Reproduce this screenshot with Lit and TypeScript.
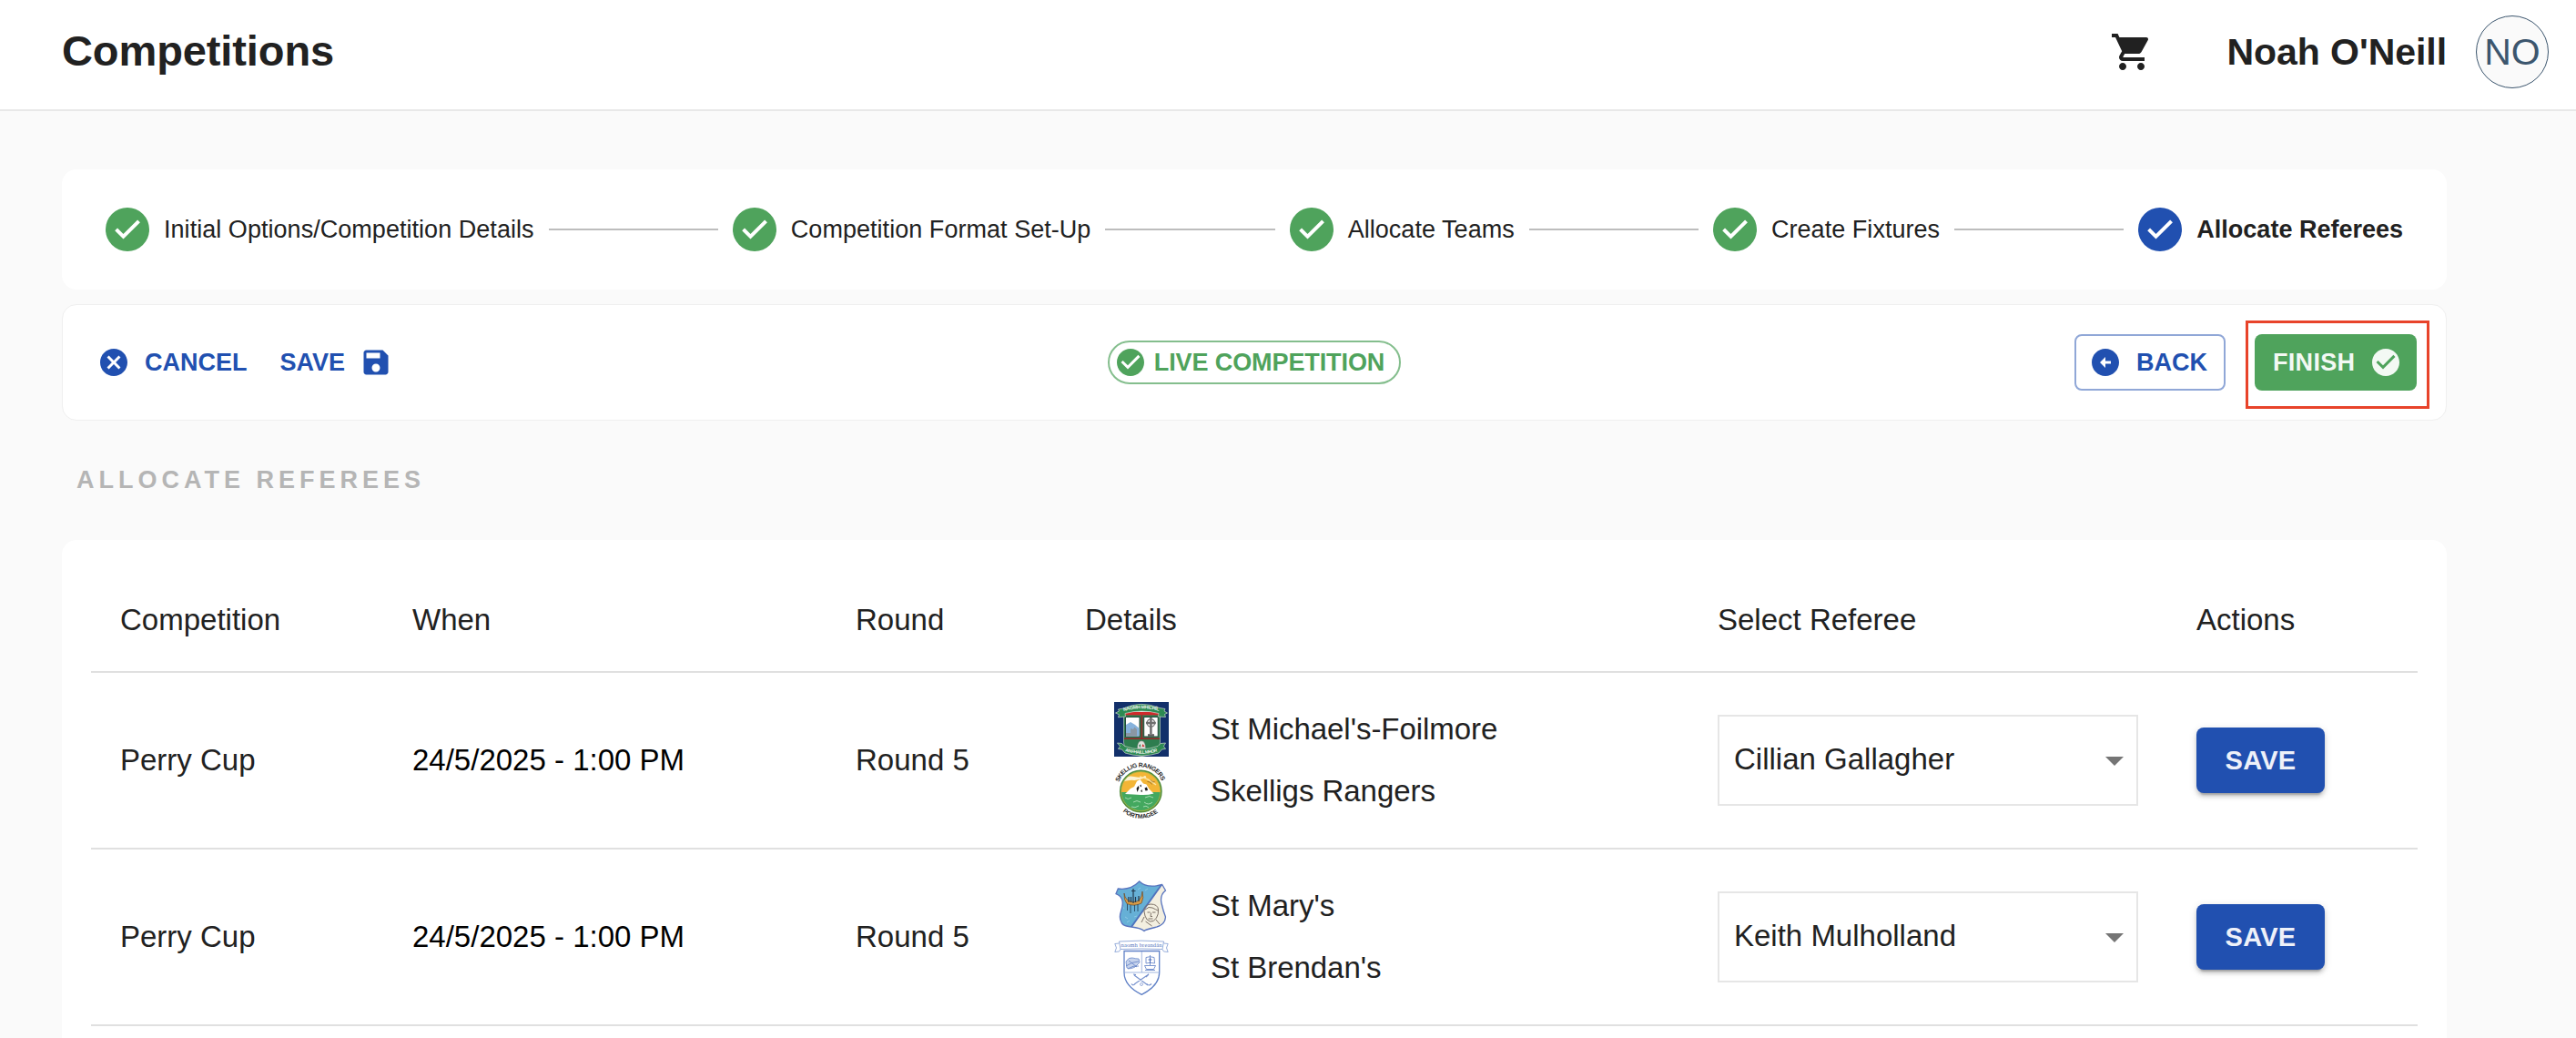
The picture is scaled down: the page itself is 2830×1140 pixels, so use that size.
import { LitElement, html, css, svg, TemplateResult } from 'lit';
import { customElement, property, state } from 'lit/decorators.js';
import { classMap } from 'lit/directives/class-map.js';

interface Step {
  label: string;
  active?: boolean;
}

interface Team {
  name: string;
  crest: string;
}

interface Fixture {
  competition: string;
  when: string;
  round: string;
  teams: Team[];
  referee: string;
}

const ICONS: Record<string, string> = {
  cart: 'M7 18c-1.1 0-1.99.9-1.99 2S5.9 22 7 22s2-.9 2-2-.9-2-2-2zM1 2v2h2l3.6 7.59-1.35 2.45c-.16.28-.25.61-.25.96 0 1.1.9 2 2 2h12v-2H7.42c-.14 0-.25-.11-.25-.25l.03-.12.9-1.63h7.45c.75 0 1.41-.41 1.75-1.03l3.58-6.49c.08-.14.12-.31.12-.48 0-.55-.45-1-1-1H5.21l-.94-2H1zm16 16c-1.1 0-1.99.9-1.99 2s.89 2 1.99 2 2-.9 2-2-.9-2-2-2z',
  check: 'M9 15.3L4.700 11 2.800 12.900 9 19 21.300 6.900 19.400 5z',
  cancel: 'M12 2C6.47 2 2 6.47 2 12s4.47 10 10 10 10-4.47 10-10S17.53 2 12 2zm5 13.59L15.59 17 12 13.41 8.41 17 7 15.59 10.59 12 7 8.41 8.41 7 12 10.59 15.59 7 17 8.41 13.41 12 17 15.59z',
  save: 'M17 3H5c-1.11 0-2 .9-2 2v14c0 1.1.89 2 2 2h14c1.1 0 2-.9 2-2V7l-4-4zm-5 16c-1.66 0-3-1.34-3-3s1.34-3 3-3 3 1.34 3 3-1.34 3-3 3zm3-10H5V5h10v4z',
  checkCircle: 'M12 2C6.48 2 2 6.48 2 12s4.48 10 10 10 10-4.48 10-10S17.52 2 12 2zm-2 15l-5-5 1.41-1.41L10 14.17l7.59-7.59L19 8l-9 9z',
  backCircle: 'M12 2C6.48 2 2 6.48 2 12s4.48 10 10 10 10-4.48 10-10S17.52 2 12 2zm4 11h-4v3l-4-4 4-4v3h4v2z',
};

@customElement('app-icon')
class AppIcon extends LitElement {
  @property() name = '';

  static styles = css`
    :host {
      display: block;
      width: 36px;
      height: 36px;
      flex: none;
    }
    svg {
      display: block;
      width: 100%;
      height: 100%;
      fill: currentColor;
    }
  `;

  render() {
    return html`<svg viewBox="0 0 24 24"><path d=${ICONS[this.name]}></path></svg>`;
  }
}

const CRESTS: Record<string, TemplateResult> = {
  foilmore: svg`
    <rect width="60" height="60" fill="#12306a"/>
    <path d="M10.5 10h40v34c0 8-10 14-20 15.500c-10-1.500-20-7.500-20-15.500z" fill="#2d7d4f" stroke="#b9c4bd" stroke-width=".7"/>
    <path d="M12 11V8.500q18.500-4 37 0V11z" fill="#eef2ee"/>
    <rect x="11" y="11" width="39" height="3.400" fill="#d02a2c"/>
    <path d="M30.400 14.500v25M11 40.300h39" stroke="#9c2226" stroke-width="1.600"/>
    <rect x="12.500" y="16.500" width="15.500" height="21.500" fill="#fff" stroke="#24483a" stroke-width="1"/>
    <path d="M13 25l5-3 5 3 4.600 4V37.600H13z" fill="#86b2dc"/>
    <path d="M13 34h5v-5l3 1 1.500-2.500L25 30v7.600H13z" fill="#8a97a3"/>
    <rect x="32.700" y="16.500" width="15.500" height="21.500" fill="#fff" stroke="#24483a" stroke-width="1"/>
    <circle cx="40.400" cy="23" r="4.200" fill="none" stroke="#777" stroke-width="1.300"/>
    <path d="M40.400 17v18M35 23h10.800" stroke="#6f6f6f" stroke-width="2.500"/>
    <path d="M37 36.500h7" stroke="#5f5f5f" stroke-width="2.600"/>
    <path d="M25.500 51c0-5 1.500-8.200 4.500-8.200s4.500 3.200 4.500 8.200z" fill="#dfe4de" stroke="#777" stroke-width=".5"/>
    <path d="M27 48l2-2v4z" fill="#2d7d4f"/><path d="M31.500 46l2 3h-3z" fill="#d02a2c"/>
    <path d="M1.500 12l4-2-1-2 6-1Q29-2 50 6.500l6 1-1 2.500 3.500 2-3 1.500 1 3-8-.500.500-3.500Q30 7.500 12 12.500l.500 3.500-8 .800 1-3z" fill="#2d8a52" stroke="#cbd5cd" stroke-width=".7"/>
    <path d="M3.500 45l5 .500 3 3Q30 55 48 48.500l3-3 5.500-.500-2 3.500 2 3-4 .500-3.500 4Q30 62 12 56l-3.500-4-4-.500 2-3z" fill="#2d8a52" stroke="#cbd5cd" stroke-width=".7"/>
    <path id="foil-top" d="M10.500 10Q30 4.500 50.500 10" fill="none"/>
    <path id="foil-bottom" d="M12 54Q30 59.500 49 54" fill="none"/>
    <text font-size="5.200" font-weight="700" fill="#f3f7f3"><textPath href="#foil-top" textLength="39">NAOMH MHICHÍL</textPath></text>
    <text font-size="5" font-weight="700" fill="#f3f7f3"><textPath href="#foil-bottom" textLength="36">AN FHAILL MHÓR</textPath></text>
  `,
  skelligs: svg`
    <clipPath id="skel-clip"><circle cx="29.300" cy="30" r="21.500"/></clipPath>
    <circle cx="29.300" cy="30" r="22.600" fill="#f3b536" stroke="#4f8c3c" stroke-width="1.600"/>
    <g clip-path="url(#skel-clip)">
      <rect x="6" y="31" width="48" height="24" fill="#43a85f"/>
      <path d="M6 18q8-6 16-4t12-1q4 2-4 3.500t-8 1.500q-7-1-16 3z" fill="#fdf3d6"/>
      <path d="M28 14q10 2 18 9" fill="none" stroke="#fbe3a0" stroke-width="1.400"/>
      <path d="M12 33l6-6 4-2 3-6 3.500-2 3.500 4.500 3.500 1 3 5 5 5q-7 2-14.500 1.500t-17-1z" fill="#fff"/>
      <path d="M24.500 27l2-3 1 2-2 5zM28 24l1.500-1.500.5 3zM33.500 26.500l2.500-1 1 3.500-2.500.500zM29 30l1.500-2 .5 3z" fill="#1c1c1c"/>
      <path d="M36.500 19.500l3 .500 2 2.500M40 17.500l2.500 2.500 2-.5" fill="none" stroke="#7d5a1d" stroke-width=".7"/>
      <path d="M12 37q3 3 7 0M34 37q5-3 9 0M21 42q4-3 8 0M19 47q4 2 8-1M33 42q5 4 9 0M32 47q3-2 6 1" fill="none" stroke="#bfe6c7" stroke-width=".8"/>
    </g>
    <circle cx="29.300" cy="30" r="21.500" fill="none" stroke="#8fb34a" stroke-width=".7"/>
    <path id="skel-top" d="M5.400 20A25.200 25.200 0 0 1 53.400 22" fill="none"/>
    <path id="skel-bottom" d="M9.500 52.200A29.700 29.700 0 0 0 49 52.400" fill="none"/>
    <text font-size="6.800" font-weight="700" fill="#1d1d1d"><textPath href="#skel-top" textLength="60" lengthAdjust="spacing">SKELLIG RANGERS</textPath></text>
    <text font-size="6.600" font-weight="700" fill="#1d1d1d"><textPath href="#skel-bottom" textLength="42">PORTMAGEE</textPath></text>
  `,
  marys: svg`
    <clipPath id="mary-clip"><path d="M27.700 3Q36 11 52.700 6.500L56.500 13Q50 18 52 27T56.500 42Q56 51 45 53.500T33 57.500Q29 54 19 53T8 48Q5 43 7.500 36T9 24Q8 19 2 16.700L4.300 11Q18 13 27.700 3z"/></clipPath>
    <g clip-path="url(#mary-clip)">
      <rect width="60" height="60" fill="#f3efe0"/>
      <path d="M0 0h56L18 56H0z" fill="#66b0d6"/>
      <path d="M54 4L16 57" stroke="#4f72bd" stroke-width="1.800"/>
      <path d="M11 16q1 9 10 9.500t10-11.500q2 7-1 13-8 4-16 .500-3.500-4-3-11.500z" fill="#d79a45" stroke="#6b4a28" stroke-width=".7"/>
      <path d="M21 11v16M19 13.500h4.500M16 20v6M18.500 20v6M23.500 20v6M27 19v6" stroke="#22364a" stroke-width="1.200"/>
      <path d="M14.500 28v7M18 29v9M22.500 29v7M26 28v8" stroke="#27465f" stroke-width=".9"/>
      <path d="M9 30l2 3M12 42l3 2M26 12l3-2M14 48l3-2M34 13l3-2M22 42l3-1" stroke="#8cc7e4" stroke-width="1"/>
      <path d="M33 36q-1-7 7-8 8 0 8.500 6 .5 5-2 9-3 5-7 4t-5.500-6zM34 34q4-4 8-2t6 3M36.500 37h3M42 37h3.500M40.500 37.500l-.5 4h2M37.500 44h5M33 42l-3 6M46 45l4 5M34.500 47l7 5" fill="none" stroke="#7d7167" stroke-width="1"/>
    </g>
    <path d="M27.700 3Q36 11 52.700 6.500L56.500 13Q50 18 52 27T56.500 42Q56 51 45 53.500T33 57.500Q29 54 19 53T8 48Q5 43 7.500 36T9 24Q8 19 2 16.700L4.300 11Q18 13 27.700 3z" fill="none" stroke="#5874bf" stroke-width="1.300"/>
  `,
  brendans: svg`
    <path d="M11 11.500h38.700V35c0 12-11 20-19.500 24.300C21.500 55 11 47 11 35z" fill="#fff" stroke="#5f80c6" stroke-width="1.300"/>
    <path d="M30.300 12v23M11 35h38.700" stroke="#8ea6d8" stroke-width=".8"/>
    <path d="M5.500 1Q30-.800 54.500 1L53 9.500Q30 8.500 7 9.500zM5.500 3L.800 3.500 2.500 8 .800 12.500 5.500 12 7 9.500M54.500 3l4.700.500L57.500 8l1.700 4.500-4.700-.500L53 9.500" fill="#fff" stroke="#7f9ad2" stroke-width=".8"/>
    <text x="7.500" y="7.200" font-size="6.500" fill="#5475bd" class="gaelic" textLength="45">naomh breandán</text>
    <path d="M13 23q3-5 7-4t7 1l1 4-5 5q-6 3-9 1z" fill="#c6d3ec" stroke="#6d8bcb" stroke-width=".8"/>
    <path d="M13 28q7-5 14-5M15 31q6-4 12-3M16 22l9 7" fill="none" stroke="#5f7fc4" stroke-width=".8"/>
    <path d="M33.500 27.500h12l-2 4h-8zM39.500 16v11M35 18.500q4-1.500 9 0l.500 6.500q-5-1.500-9.500 0zM34 32.500h11" fill="none" stroke="#6d8bcb" stroke-width=".9"/>
    <path d="M39.500 19v6M37.500 21h4" stroke="#4a6cb8" stroke-width="1"/>
    <path d="M22 38l15 11M38 37L22 48M21 37l3 .500M19 47.500q2 3 5-1M41 47.500q-3 3-5 0M35 40l3-3" fill="none" stroke="#7892ce" stroke-width="1.200"/>
    <circle cx="30" cy="48" r="1.500" fill="none" stroke="#7892ce" stroke-width=".7"/>
  `,
};

@customElement('team-crest')
class TeamCrest extends LitElement {
  @property() name = '';

  static styles = css`
    :host {
      display: block;
      width: 60px;
      height: 60px;
      flex: none;
    }
    svg {
      display: block;
      width: 60px;
      height: 60px;
      overflow: visible;
      letter-spacing: 0;
      font-family: "Liberation Sans", Arial, sans-serif;
    }
    .gaelic {
      font-family: "Liberation Serif", serif;
    }
  `;

  render() {
    return html`<svg viewBox="0 0 60 60">${CRESTS[this.name]}</svg>`;
  }
}

@customElement('competition-stepper')
class CompetitionStepper extends LitElement {
  @property({ attribute: false }) steps: Step[] = [];

  static styles = css`
    :host {
      display: flex;
      align-items: center;
      gap: 16px;
      height: 132px;
      padding: 0 48px;
      box-sizing: border-box;
      border-radius: 16px;
      background: #fff;
      font-size: 27px;
      letter-spacing: 0.04px;
    }
    .step {
      display: flex;
      align-items: center;
      gap: 16px;
      white-space: nowrap;
    }
    .badge {
      display: flex;
      align-items: center;
      justify-content: center;
      width: 48px;
      height: 48px;
      border-radius: 50%;
      background: #4fa35c;
      color: #fff;
    }
    .active {
      font-weight: 700;
      letter-spacing: 0;
    }
    .active .badge {
      background: #2150b0;
    }
    .line {
      flex: 1;
      height: 2px;
      background: #bdbdbd;
    }
  `;

  render() {
    return this.steps.map((step, i) => html`
      ${i > 0 ? html`<div class="line"></div>` : ''}
      <div class=${classMap({ step: true, active: !!step.active })}>
        <div class="badge"><app-icon name="check"></app-icon></div>
        <span>${step.label}</span>
      </div>
    `);
  }
}

@customElement('app-root')
class AppRoot extends LitElement {
  @state() private steps: Step[] = [
    { label: 'Initial Options/Competition Details' },
    { label: 'Competition Format Set-Up' },
    { label: 'Allocate Teams' },
    { label: 'Create Fixtures' },
    { label: 'Allocate Referees', active: true },
  ];

  @state() private fixtures: Fixture[] = [
    {
      competition: 'Perry Cup',
      when: '24/5/2025 - 1:00 PM',
      round: 'Round 5',
      teams: [
        { name: "St Michael's-Foilmore", crest: 'foilmore' },
        { name: 'Skelligs Rangers', crest: 'skelligs' },
      ],
      referee: 'Cillian Gallagher',
    },
    {
      competition: 'Perry Cup',
      when: '24/5/2025 - 1:00 PM',
      round: 'Round 5',
      teams: [
        { name: "St Mary's", crest: 'marys' },
        { name: "St Brendan's", crest: 'brendans' },
      ],
      referee: 'Keith Mulholland',
    },
  ];

  static styles = css`
    :host {
      display: block;
      height: 1140px;
      overflow: hidden;
      background: #fafafa;
      color: #212121;
      font-family: "Liberation Sans", Arial, sans-serif;
    }
    header {
      display: flex;
      align-items: center;
      height: 122px;
      padding: 0 30px 6px 68px;
      box-sizing: border-box;
      border-bottom: 2px solid #e8e8e8;
      background: #fff;
    }
    h1 {
      flex: 1;
      margin: 0 0 3px;
      font-size: 47px;
      font-weight: 700;
      letter-spacing: -0.1px;
    }
    .cart {
      width: 48px;
      height: 48px;
      margin-right: 80px;
    }
    .user {
      font-size: 41px;
      font-weight: 700;
      letter-spacing: -0.05px;
    }
    .avatar {
      display: flex;
      align-items: center;
      justify-content: center;
      width: 80px;
      height: 80px;
      margin-left: 32px;
      box-sizing: border-box;
      border: 1px solid #3c566e;
      border-radius: 50%;
      background: #fafafa;
      color: #3c566e;
      font-size: 41px;
    }
    main {
      padding: 64px 142px 0 68px;
    }
    .toolbar {
      display: grid;
      grid-template-columns: 1fr auto 1fr;
      align-items: center;
      height: 128px;
      margin-top: 16px;
      padding: 0 32px;
      box-sizing: border-box;
      border: 1px solid #efefef;
      border-radius: 16px;
      background: #fff;
      font-size: 27px;
      font-weight: 700;
    }
    .group {
      display: flex;
      align-items: center;
      padding-left: 6px;
    }
    .end {
      justify-content: flex-end;
      gap: 32px;
    }
    .btn {
      display: flex;
      align-items: center;
      box-sizing: border-box;
      letter-spacing: 0.3px;
    }
    .link {
      gap: 16px;
      margin-right: 36px;
      color: #2150b0;
      letter-spacing: 0;
    }
    .back {
      gap: 16px;
      width: 166px;
      height: 62px;
      padding-left: 14px;
      border: 2px solid #90a7d7;
      border-radius: 8px;
      color: #2150b0;
      letter-spacing: 0;
    }
    .finish {
      position: relative;
      justify-content: space-between;
      width: 178px;
      height: 62px;
      padding: 0 16px 0 20px;
      border-radius: 8px;
      background: #4fa35c;
      color: #f3f9f4;
    }
    .highlight {
      position: absolute;
      inset: -15px -14px -20px -10px;
      border: 3px solid #e8432a;
    }
    .chip {
      display: flex;
      align-items: center;
      gap: 8px;
      height: 48px;
      padding: 0 16px 0 5px;
      box-sizing: border-box;
      border: 2px solid #84be8d;
      border-radius: 24px;
      color: #4fa35c;
      letter-spacing: -0.1px;
    }
    h2 {
      margin: 0 0 0 16px;
      font-size: 27px;
      font-weight: 700;
      line-height: 131px;
      letter-spacing: 5px;
      color: #b5b5b5;
    }
    .table {
      height: 700px;
      padding: 32px 32px 0;
      border-radius: 16px;
      background: #fff;
      font-size: 33px;
    }
    .row {
      display: grid;
      grid-template-columns: 321px 487px 252px 695px 526px 1fr;
      align-items: center;
      height: 194px;
      padding-left: 32px;
      box-sizing: border-box;
      border-bottom: 2px solid #e0e0e0;
      white-space: nowrap;
    }
    .head {
      height: 114px;
    }
    .when {
      color: #000;
    }
    .teams {
      display: grid;
      gap: 8px;
      padding-left: 32px;
    }
    .team {
      display: flex;
      align-items: center;
      gap: 46px;
      letter-spacing: -0.04px;
    }
    .select {
      display: flex;
      align-items: center;
      justify-content: space-between;
      width: 462px;
      height: 100px;
      padding: 0 14px 0 16px;
      box-sizing: border-box;
      border: 2px solid #e6e6e6;
    }
    .value {
      padding-bottom: 2px;
    }
    .arrow {
      border: 10px solid transparent;
      border-top-color: #757575;
      border-bottom: 0;
      margin-top: 2px;
    }
    .save {
      justify-content: center;
      width: 141px;
      height: 72px;
      border-radius: 8px;
      background: #2150b0;
      color: #eef1f9;
      font-size: 29px;
      font-weight: 700;
      box-shadow: 0 6px 2px -4px rgba(0, 0, 0, 0.2), 0 4px 4px rgba(0, 0, 0, 0.14), 0 2px 10px rgba(0, 0, 0, 0.12);
    }
  `;

  render() {
    return html`
      <header>
        <h1>Competitions</h1>
        <app-icon class="cart" name="cart"></app-icon>
        <span class="user">Noah O'Neill</span>
        <div class="avatar">NO</div>
      </header>
      <main>
        <competition-stepper .steps=${this.steps}></competition-stepper>
        <div class="toolbar">
          <div class="group">
            <div class="btn link"><app-icon name="cancel"></app-icon>CANCEL</div>
            <div class="btn link">SAVE<app-icon name="save"></app-icon></div>
          </div>
          <div class="chip"><app-icon name="checkCircle"></app-icon>LIVE COMPETITION</div>
          <div class="group end">
            <div class="btn back"><app-icon name="backCircle"></app-icon>BACK</div>
            <div class="btn finish">
              FINISH<app-icon name="checkCircle"></app-icon>
              <div class="highlight"></div>
            </div>
          </div>
        </div>
        <h2>ALLOCATE REFEREES</h2>
        <div class="table">
          <div class="row head">
            <span>Competition</span>
            <span>When</span>
            <span>Round</span>
            <span>Details</span>
            <span>Select Referee</span>
            <span>Actions</span>
          </div>
          ${this.fixtures.map((fixture) => this._renderFixture(fixture))}
        </div>
      </main>
    `;
  }

  private _renderFixture(fixture: Fixture) {
    return html`
      <div class="row">
        <span>${fixture.competition}</span>
        <span class="when">${fixture.when}</span>
        <span>${fixture.round}</span>
        <div class="teams">
          ${fixture.teams.map((team) => html`
            <div class="team">
              <team-crest name=${team.crest}></team-crest>
              <span>${team.name}</span>
            </div>
          `)}
        </div>
        <div class="select">
          <span class="value">${fixture.referee}</span>
          <div class="arrow"></div>
        </div>
        <div class="btn save">SAVE</div>
      </div>
    `;
  }
}
